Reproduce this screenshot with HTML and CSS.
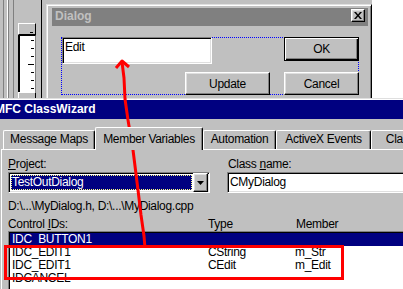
FILE: index.html
```html
<!DOCTYPE html>
<html lang="en">
<head>
    <meta charset="UTF-8">
    <meta name="viewport" content="width=device-width, initial-scale=1.0">
    <title>MFC ClassWizard - Member Variables</title>
    <link rel="stylesheet" href="styles.css">
</head>
<body>
    <div class="screen">
        <!-- Dialog editor behind the wizard -->
        <div class="desk">
            <div class="strip">
                <div class="ruler">
                    <div class="ruler-cap"><span class="tick"></span></div>
                    <div class="ruler-scale">
                        <span class="tick"></span>
                        <span class="tick"></span>
                        <span class="tick"></span>
                        <span class="tick long"></span>
                        <span class="tick"></span>
                        <span class="tick"></span>
                        <span class="tick"></span>
                    </div>
                    <div class="ruler-cap"></div>
                </div>
            </div>

            <div class="dlg">
                <div class="dlg-title">
                    <span>Dialog</span>
                    <span class="close bevel">
                        <svg width="8" height="7" viewBox="0 0 8 7"><path d="M0 0h2l2 2.5L6 0h2L5 3.5 8 7H6L4 4.5 2 7H0l3-3.5z" fill="#000"/></svg>
                    </span>
                </div>
                <div class="dlg-body">
                    <div class="group">
                        <div class="group-in">
                            <div class="group-row">
                                <div class="edit sunken">Edit</div>
                                <div class="btn btn-default">OK</div>
                            </div>
                            <div class="group-row end">
                                <div class="btn bevel btn-update">Update</div>
                                <div class="btn bevel btn-cancel">Cancel</div>
                            </div>
                        </div>
                    </div>
                </div>
            </div>

            <div class="desk-rest"></div>
        </div>

        <!-- ClassWizard window -->
        <div class="wiz">
            <div class="wiz-title"><span>MFC ClassWizard</span></div>

            <div class="tabs">
                <div class="tab tab-maps">Message Maps</div>
                <div class="tab tab-vars active">Member Variables</div>
                <div class="tab tab-auto">Automation</div>
                <div class="tab tab-events">ActiveX Events</div>
                <div class="tab tab-info">Class Info</div>
            </div>

            <div class="panel">
                <div class="fields">
                    <div class="label"><u>P</u>roject:</div>
                    <div class="label second">Class <u>n</u>ame:</div>
                    <div class="combo sunken">
                        <div class="combo-sel"><span>TestOutDialog</span></div>
                        <div class="combo-btn bevel">
                            <svg width="7" height="4" viewBox="0 0 7 4"><path d="M0 0h7L3.5 4z" fill="#000"/></svg>
                        </div>
                    </div>
                    <div class="field sunken">CMyDialog</div>
                </div>

                <div class="path">D:\...\MyDialog.h, D:\...\MyDialog.cpp</div>

                <div class="cols">
                    <span>Control <u>I</u>Ds:</span>
                    <span>Type</span>
                    <span>Member</span>
                </div>

                <div class="list">
                    <div class="list-row selected"><span>IDC_BUTTON1</span><span></span><span></span></div>
                    <div class="list-row"><span>IDC_EDIT1</span><span>CString</span><span>m_Str</span></div>
                    <div class="list-row"><span>IDC_EDIT1</span><span>CEdit</span><span>m_Edit</span></div>
                    <div class="list-row"><span>IDCANCEL</span><span></span><span></span></div>
                </div>
            </div>
        </div>

        <!-- red annotation drawn over the screenshot -->
        <div class="mark"></div>
        <svg class="arrow" width="403" height="289" viewBox="0 0 403 289">
            <polyline points="145,248 144,236 141,215 138,190 133,150 128,120 125,99 124,78 122,62" fill="none" stroke="#f00" stroke-width="3" stroke-linejoin="round"/>
            <polyline points="116,68 122,61 129,67" fill="none" stroke="#f00" stroke-width="3" stroke-linejoin="round"/>
        </svg>
    </div>
</body>
</html>
```

FILE: styles.css
```css
* {
    box-sizing: border-box;
}

body {
    margin: 0;
    overflow: hidden;
    font-family: "Liberation Sans", Arial, sans-serif;
    font-size: 12px;
    letter-spacing: -0.3px;
    color: #000;
}

.screen {
    position: relative;
    width: 403px;
    height: 289px;
    overflow: hidden;
    background: #c0c0c0;
}

/* shared 3D borders */
.bevel {
    background: #c0c0c0;
    border: 1px solid;
    border-color: #fff #000 #000 #fff;
    box-shadow: inset -1px -1px #808080, inset 1px 1px #dfdfdf;
}

.sunken {
    background: #fff;
    border: 1px solid;
    border-color: #808080 #fff #fff #808080;
    box-shadow: inset 1px 1px #000, inset -1px -1px #dfdfdf;
}

/* Top part: dialog editor */
.desk {
    display: flex;
    height: 98px;
    overflow: hidden;
}

.strip {
    flex: 0 0 46px;
    padding: 23px 0 0 18px;
    background: linear-gradient(90deg, #c0c0c0 0 3px, #808080 3px 4px, #c0c0c0 4px 7px, #fff 7px 8px, #808080 8px 9px, #c0c0c0 9px 13px, #808080 13px 14px, #c0c0c0 14px 41px, #000 41px 42px, #c0c0c0 42px);
}

.ruler {
    width: 18px;
    display: flex;
    flex-direction: column;
}

.ruler-cap {
    height: 12px;
    display: flex;
    justify-content: flex-end;
    align-items: flex-end;
    padding: 0 2px 1px 0;
    border: 1px solid;
    border-color: #fff #000 #000 #fff;
}

.ruler-scale {
    height: 57px;
    display: flex;
    flex-direction: column;
    align-items: flex-end;
    gap: 7px;
    padding: 4px 1px 0 0;
    background: #fff;
    border-left: 2px solid #000;
    border-top: 1px solid #000;
    border-right: 1px solid #808080;
}

.tick {
    width: 3px;
    height: 1px;
    background: #000;
}

.tick.long {
    width: 6px;
}

.dlg {
    flex: 0 0 326px;
    margin-top: 4px;
    padding: 3px 3px 0 5px;
    border-top: 1px solid #dfdfdf;
    border-left: 1px solid #dfdfdf;
    border-right: 1px solid #000;
    box-shadow: inset 1px 1px #fff, inset -1px 0 #808080;
}

.dlg-title {
    display: flex;
    justify-content: space-between;
    align-items: flex-start;
    height: 18px;
    padding: 0 3px;
    background: #808080;
    color: #c0c0c0;
    font-weight: bold;
    line-height: 16px;
    letter-spacing: 0;
}

.close {
    width: 14px;
    height: 13px;
    margin-top: 1px;
    display: flex;
    align-items: center;
    justify-content: center;
}

.dlg-body {
    padding: 11px 0 0 9px;
}

.group {
    width: 298px;
    height: 58px;
    border: 1px dotted #00f;
}

.group-in {
    margin: -1px;
}

.group-row {
    display: flex;
    justify-content: space-between;
    align-items: flex-start;
}

.group-row.end {
    justify-content: flex-end;
    gap: 14px;
    margin-top: 8px;
}

.edit {
    width: 150px;
    height: 27px;
    margin-left: 1px;
    padding: 2px 0 0 2px;
    line-height: 14px;
}

.btn {
    display: flex;
    align-items: center;
    justify-content: center;
    height: 23px;
}

.btn-default {
    width: 75px;
    height: 24px;
    background: #c0c0c0;
    border: 1px solid #000;
    box-shadow: inset 1px 1px #fff, inset -1px -1px #000, inset -2px -2px #808080;
}

.btn-update {
    width: 85px;
}

.btn-cancel {
    width: 75px;
}

.desk-rest {
    flex: 1;
    background: #fff;
}

/* ClassWizard window */
.wiz {
    border-top: 1px solid #dfdfdf;
    box-shadow: inset 0 1px #fff;
    padding-top: 1px;
}

.wiz-title {
    height: 19px;
    background: #000080;
    color: #fff;
    font-weight: bold;
    line-height: 19px;
    letter-spacing: 0;
    white-space: nowrap;
}

.wiz-title span {
    margin-left: -5px;
}

.tabs {
    display: flex;
    align-items: flex-end;
    padding: 8px 0 0 3px;
    height: 30px;
    white-space: nowrap;
}

.tab {
    flex-shrink: 0;
    height: 19px;
    padding-top: 1px;
    line-height: 14px;
    text-align: center;
    border: 1px solid;
    border-color: #fff #000 transparent #fff;
    border-bottom: none;
    border-radius: 2px 2px 0 0;
    box-shadow: inset -1px 0 #808080;
}

.tab.active {
    position: relative;
    z-index: 1;
    height: 23px;
    margin-bottom: -1px;
    padding-top: 4px;
    background: #c0c0c0;
}

.tab-maps { width: 92px; }
.tab-vars { width: 108px; }
.tab-auto { width: 73px; }
.tab-events { width: 95px; }
.tab-info { width: 80px; }

.panel {
    margin-left: 1px;
    padding: 8px 0 0 6px;
    border-top: 1px solid #fff;
    border-left: 1px solid #fff;
}

.fields {
    display: grid;
    grid-template-columns: 202px 1fr;
    column-gap: 17px;
    row-gap: 1px;
    line-height: 13px;
}

.label.second {
    padding-left: 1px;
}

.combo {
    height: 21px;
    display: flex;
    padding: 1px;
}

.combo-sel {
    flex: 1;
    margin: 1px 1px 1px 1px;
    background: #000080;
    border: 1px dotted #ffff80;
    color: #fff;
    line-height: 13px;
}

.combo-btn {
    width: 15px;
    margin: -1px 0 -1px 0;
    display: flex;
    align-items: center;
    justify-content: center;
}

.field {
    height: 21px;
    margin-right: -6px;
    padding: 3px 0 0 2px;
    line-height: 13px;
}

.path {
    margin-top: 7px;
    line-height: 13px;
}

.cols {
    display: grid;
    grid-template-columns: 200px 88px 1fr;
    margin-top: 5px;
    line-height: 13px;
}

.list {
    margin-right: -6px;
    height: 60px;
    background: #fff;
    border-top: 1px solid #808080;
    border-left: 1px solid #808080;
    box-shadow: inset 1px 1px #000;
    padding: 1px 0 0 1px;
}

.list-row {
    display: grid;
    grid-template-columns: 196px 87px 1fr;
    height: 13px;
    padding-left: 2px;
    line-height: 13px;
}

.list-row.selected {
    background: #000080;
    color: #fff;
}

/* annotation */
.mark {
    position: absolute;
    left: 4px;
    top: 245px;
    width: 340px;
    height: 35px;
    border: 3px solid #f00;
}

.arrow {
    position: absolute;
    left: 0;
    top: 0;
    pointer-events: none;
}
```
